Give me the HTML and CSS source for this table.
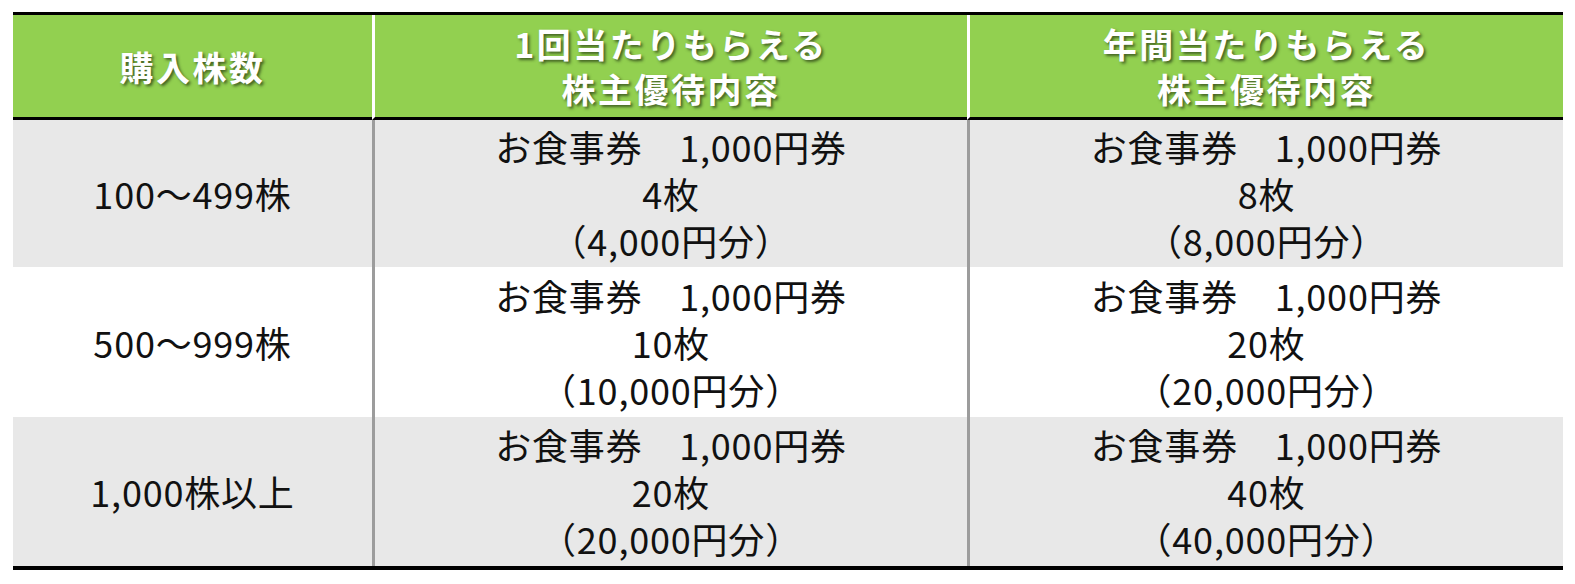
FILE: index.html
```html
<!DOCTYPE html>
<html lang="ja">
<head>
<meta charset="utf-8">
<link rel="stylesheet" href="styles.css">
</head>
<body>
<div class="table">
  <div class="cell head c1"><span>購入株数</span></div>
  <div class="cell head c2"><span>1回当たりもらえる<br>株主優待内容</span></div>
  <div class="cell head c3"><span>年間当たりもらえる<br>株主優待内容</span></div>

  <div class="cell body gray c1"><span>100～499株</span></div>
  <div class="cell body gray c2"><span>お食事券　1,000円券<br>4枚<br>（4,000円分）</span></div>
  <div class="cell body gray c3"><span>お食事券　1,000円券<br>8枚<br>（8,000円分）</span></div>

  <div class="cell body white c1"><span>500～999株</span></div>
  <div class="cell body white c2"><span>お食事券　1,000円券<br>10枚<br>（10,000円分）</span></div>
  <div class="cell body white c3"><span>お食事券　1,000円券<br>20枚<br>（20,000円分）</span></div>

  <div class="cell body gray c1"><span>1,000株以上</span></div>
  <div class="cell body gray c2"><span>お食事券　1,000円券<br>20枚<br>（20,000円分）</span></div>
  <div class="cell body gray c3"><span>お食事券　1,000円券<br>40枚<br>（40,000円分）</span></div>
</div>
</body>
</html>
```
FILE: styles.css
```css
html, body {
  margin: 0;
  padding: 0;
  background: #ffffff;
}
body {
  padding: 12px 12px 0 13px;
  font-family: "Noto Sans CJK JP", "Noto Sans", sans-serif;
}
.table {
  width: 1550px;
  display: grid;
  grid-template-columns: 359px 595px 596px;
  grid-template-rows: 105px 147px 150px 149px;
  border-top: 3px solid #000;
  border-bottom: 4px solid #000;
}
.cell {
  display: flex;
  align-items: center;
  justify-content: center;
  text-align: center;
  box-sizing: border-box;
  white-space: nowrap;
}
.head {
  background: #92d050;
  color: #ffffff;
  font-weight: 700;
  font-size: 34px;
  letter-spacing: 2.5px;
  line-height: 45px;
  text-shadow: 2px 2px 3px rgba(40, 60, 20, 0.75);
  border-bottom: 3px solid #000;
}
.head.c2, .head.c3 {
  border-left: 3px solid #ffffff;
}
.body {
  color: #111111;
  font-size: 36px;
  letter-spacing: 0.8px;
  line-height: 47px;
  font-weight: 400;
}
.body.c2, .body.c3 {
  border-left: 3px solid #9c9c9c;
}
.gray {
  background: #e8e8e8;
}
.white {
  background: #ffffff;
}
```
